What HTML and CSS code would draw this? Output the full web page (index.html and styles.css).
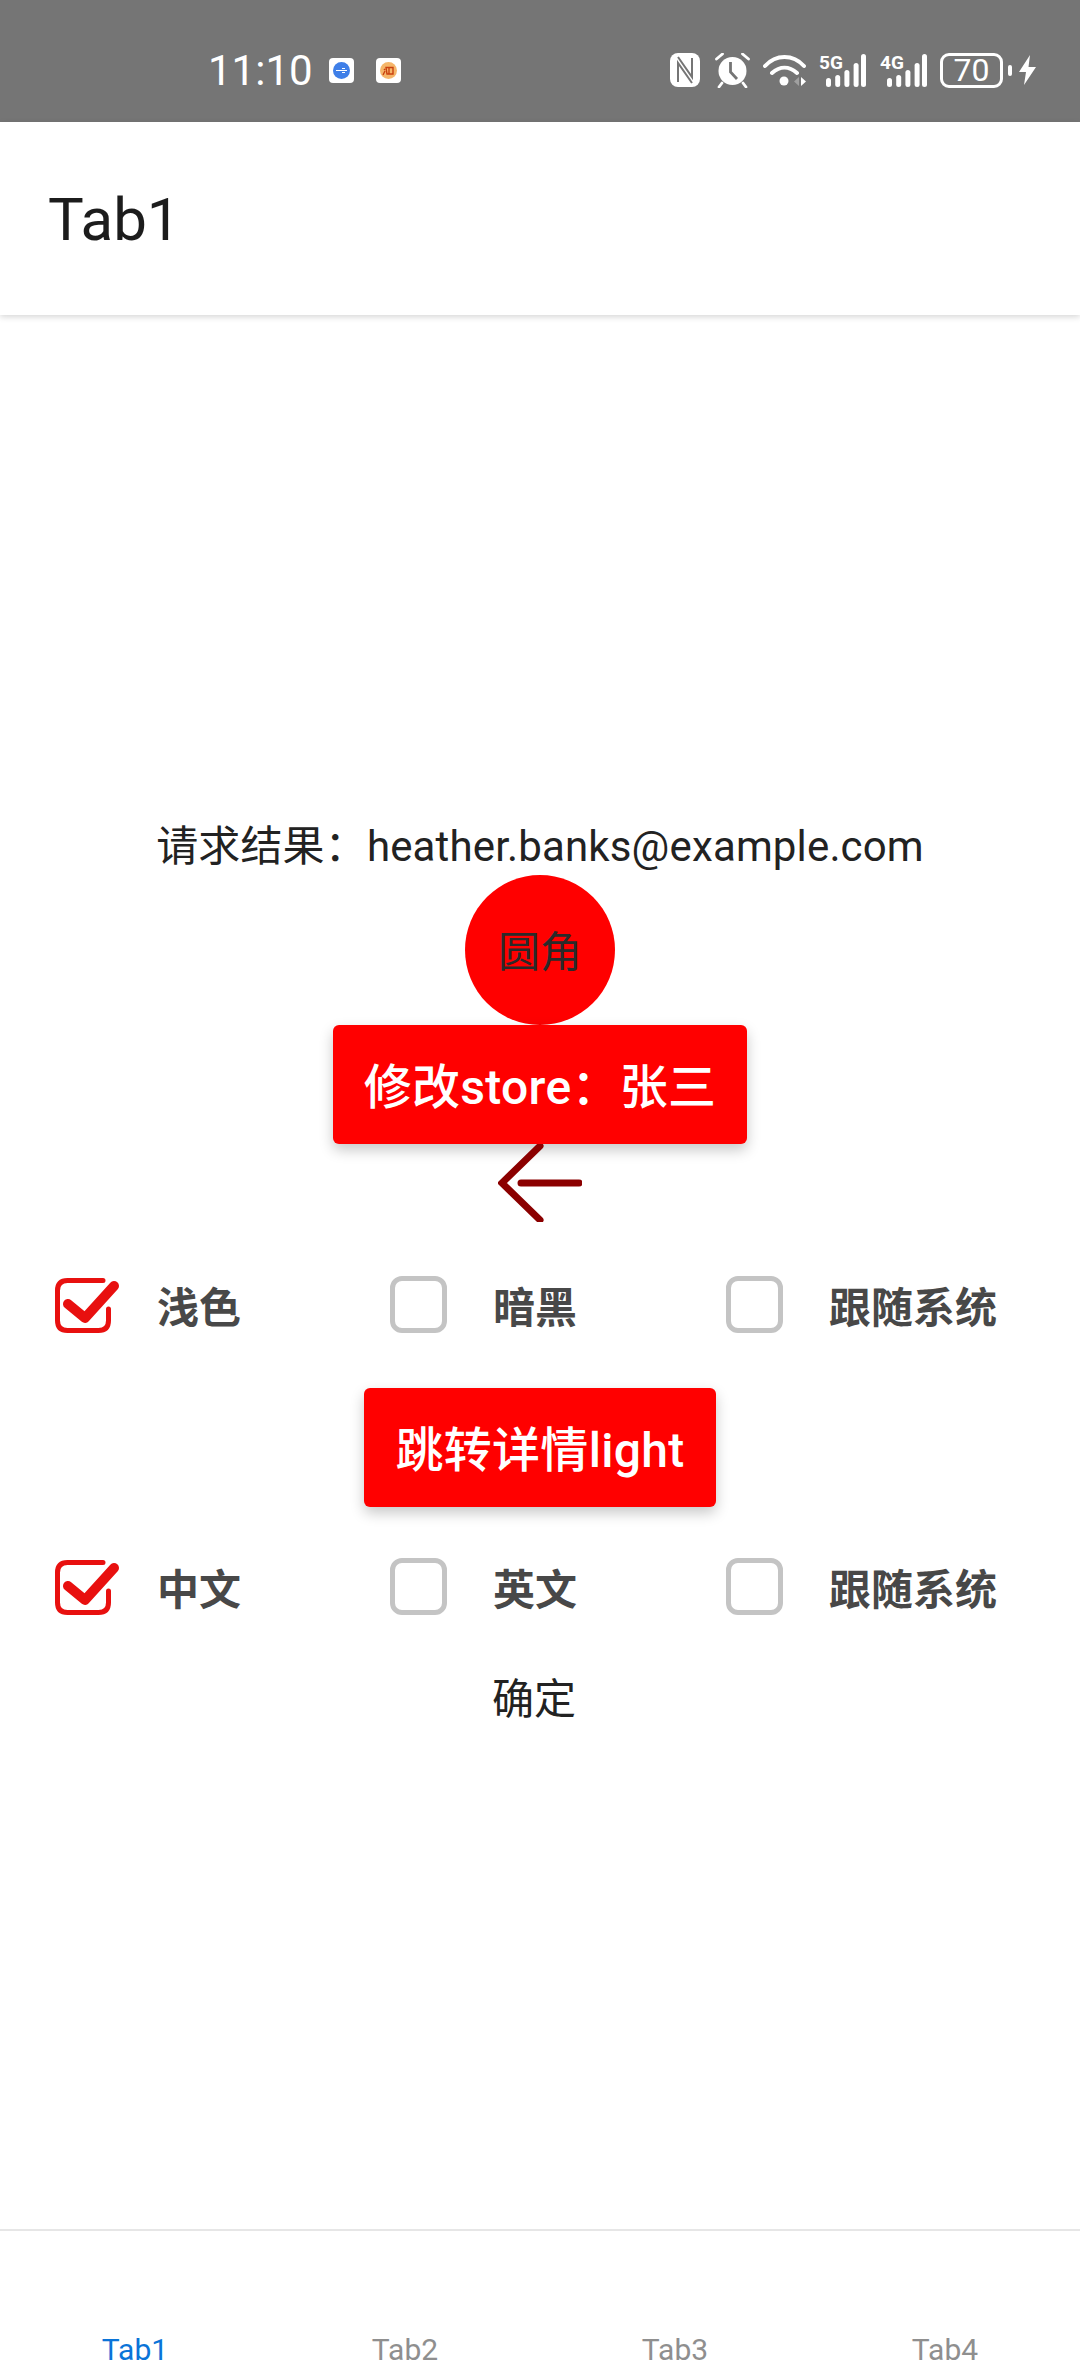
FILE: index.html
```html
<!DOCTYPE html>
<html lang="zh">
<head>
<meta charset="utf-8">
<title>Tab1</title>
<link rel="stylesheet" href="styles.css">
</head>
<body>
<div class="app">
  <div class="status">
    <span class="time">11:10</span>
    <span class="note"><svg viewBox="0 0 25 25" class="note-svg"><circle cx="12.5" cy="12.5" r="8.5" fill="#3f7fe8"/><path d="M7 12.500h11M13 10.500h3M13 14.500h3" stroke="#fff" stroke-width="1.2"/></svg></span>
    <span class="note"><svg viewBox="0 0 25 25" class="note-svg"><circle cx="12.5" cy="12.5" r="8.5" fill="#f5b66a"/><path d="M10 9.500h7v6.500h-6zM13 9.500v6.500M8 11l1 1M9 13l-2 4" stroke="#c9400f" stroke-width="1.4" fill="none"/></svg></span>
    <span class="spacer"></span>
    <svg class="i-nfc" viewBox="0 0 30 34"><rect width="30" height="34" rx="8" fill="#fff"/><path d="M8 29V10l14 20M22 5v19L8 4" fill="none" stroke="#757575" stroke-width="2"/></svg>
    <svg class="i-alarm" viewBox="0 0 35 35"><circle cx="17.500" cy="18" r="14" fill="#fff"/><path d="M15.500 9v10l6.500 7" fill="none" stroke="#757575" stroke-width="2.8"/><path d="M1.500 6l6-5M33.500 6l-6-5M7 30l-3 4M28 30l3 4" stroke="#fff" stroke-width="2.8" stroke-linecap="round"/></svg>
    <svg class="i-wifi" viewBox="0 0 43 32"><path d="M2 12C13 0 30 0 41 12M9 19c8-7 17-7 25 0" fill="none" stroke="#fff" stroke-width="4" stroke-linecap="round"/><circle cx="21" cy="27" r="4.500" fill="#fff"/><path d="M36 23l-5 4.500 5 4.500z" fill="#a0a0a0"/><path d="M38 23l5 4.500-5 4.500z" fill="#fff"/></svg>
    <svg class="i-sig" viewBox="0 -6 47 40"><text x="0" y="16" class="sig-t">5G</text><g fill="#fff"><rect x="7" y="25" width="5" height="9" rx="2.500"/><rect x="16.200" y="22" width="5" height="12" rx="2.500"/><rect x="25.400" y="17" width="5" height="17" rx="2.500"/><rect x="34.600" y="10" width="5" height="24" rx="2.500"/><rect x="42" y="1" width="5" height="33" rx="2.500"/></g></svg>
    <svg class="i-sig" viewBox="0 -6 47 40"><text x="0" y="16" class="sig-t">4G</text><g fill="#fff"><rect x="7" y="25" width="5" height="9" rx="2.500"/><rect x="16.200" y="22" width="5" height="12" rx="2.500"/><rect x="25.400" y="17" width="5" height="17" rx="2.500"/><rect x="34.600" y="10" width="5" height="24" rx="2.500"/><rect x="42" y="1" width="5" height="33" rx="2.500"/></g></svg>
    <span class="batt"><span class="batt-n">70</span></span>
    <span class="nub"></span>
    <svg class="i-bolt" viewBox="0 0 17 30"><path d="M11 0L0 17h7l-2 13L17 12H9.500z" fill="#fff"/></svg>
  </div>
  <header class="top"><h1 class="title">Tab1</h1></header>
  <main class="main">
    <p class="result">请求结果：heather.banks@example.com</p>
    <div class="round">圆角</div>
    <button class="btn">修改store：张三</button>
    <svg class="arrow" viewBox="0 0 84 78"><path d="M42 2L4 39l38 37M23 39h58" fill="none" stroke="#8b0000" stroke-width="7" stroke-linecap="round"/></svg>
    <div class="row row-a">
      <div class="opt"><svg class="box" viewBox="0 0 66 60"><path d="M49 6.500H13.500Q3.500 6.500 3.500 16.500V46.500Q3.500 56.500 13.500 56.500H44.500Q54.500 56.500 54.500 46.500V35" fill="none" stroke="#e8100f" stroke-width="5" stroke-linecap="round"/><path d="M14 30L31 44L60 12" fill="none" stroke="#e8100f" stroke-width="10" stroke-linecap="round" stroke-linejoin="round"/></svg><span class="lab">浅色</span></div>
      <div class="opt"><span class="off"></span><span class="lab">暗黑</span></div>
      <div class="opt"><span class="off"></span><span class="lab">跟随系统</span></div>
    </div>
    <button class="btn btn-b">跳转详情light</button>
    <div class="row row-b">
      <div class="opt"><svg class="box" viewBox="0 0 66 60"><path d="M49 6.500H13.500Q3.500 6.500 3.500 16.500V46.500Q3.500 56.500 13.500 56.500H44.500Q54.500 56.500 54.500 46.500V35" fill="none" stroke="#e8100f" stroke-width="5" stroke-linecap="round"/><path d="M14 30L31 44L60 12" fill="none" stroke="#e8100f" stroke-width="10" stroke-linecap="round" stroke-linejoin="round"/></svg><span class="lab">中文</span></div>
      <div class="opt"><span class="off"></span><span class="lab">英文</span></div>
      <div class="opt"><span class="off"></span><span class="lab">跟随系统</span></div>
    </div>
    <p class="ok">确定</p>
  </main>
  <nav class="tabs">
    <span class="tab tab-on">Tab1</span>
    <span class="tab">Tab2</span>
    <span class="tab">Tab3</span>
    <span class="tab">Tab4</span>
  </nav>
</div>
</body>
</html>
```
FILE: styles.css
```css
* { box-sizing: border-box; }
html, body { margin: 0; padding: 0; }
body { font-family: Roboto, "Noto Sans CJK SC", sans-serif; background: #fff; color: #222; }
.app { width: 1080px; height: 2376px; display: flex; flex-direction: column; overflow: hidden; }

.status { height: 122px; background: #757575; display: flex; align-items: center; padding: 18px 44px 0 208px; color: #fff; flex: none; }
.time { font-size: 42px; width: 121px; }
.note { width: 25px; height: 25px; background: #fff; border-radius: 4px; margin-right: 22px; display: block; }
.note-svg { display: block; width: 25px; height: 25px; }
.spacer { flex: 1; }
.i-nfc { width: 30px; height: 34px; margin-right: 15px; }
.i-alarm { width: 35px; height: 35px; margin-right: 13px; }
.i-wifi { width: 43px; height: 32px; margin-right: 13px; }
.i-sig { width: 47px; height: 40px; margin: -6px 14px 0 0; }
.sig-t { font: 700 19px Roboto, sans-serif; fill: #fff; }
.batt { width: 63px; height: 35px; border: 3px solid #fff; border-radius: 9px; display: flex; align-items: center; justify-content: center; margin-left: -1px; }
.batt-n { font-size: 32px; line-height: 1; }
.nub { width: 4px; height: 11px; background: #fff; border-radius: 2px; margin: 0 7px 0 5px; }
.i-bolt { width: 17px; height: 30px; }

.top { height: 193px; background: #fff; display: flex; align-items: center; padding: 2px 0 0 48px; box-shadow: 0 2px 6px rgba(0,0,0,.16); flex: none; position: relative; }
.title { margin: 0; font-size: 60px; font-weight: 400; color: #1c1c1c; }

.main { flex: 1; display: flex; flex-direction: column; align-items: center; padding-top: 503px; }
.result { margin: 0; font-size: 42px; line-height: 57px; color: #222; height: 57px; letter-spacing: .15px; white-space: nowrap; }
.round { width: 150px; height: 150px; border-radius: 50%; background: #f00; display: flex; align-items: center; justify-content: center; padding-bottom: 3px; font-size: 42px; color: #2a2a2a; flex: none; }
.btn { border: 0; background: #f00; color: #fff; font: 500 48px Roboto, "Noto Sans CJK SC", sans-serif; letter-spacing: .3px; height: 119px; padding: 0 31px 4px; border-radius: 6px; box-shadow: 0 6px 14px rgba(0,0,0,.22); flex: none; }
.arrow { width: 84px; height: 78px; flex: none; display: block; }
.row { width: 1008px; display: grid; grid-template-columns: repeat(3, 336px); flex: none; }
.row-a { margin-top: 50px; height: 64px; }
.btn-b { margin-top: 52px; }
.row-b { margin-top: 47px; height: 64px; }
.opt { display: flex; align-items: center; padding-left: 18px; }
.box { width: 66px; height: 60px; flex: none; }
.off { width: 57px; height: 57px; border: 5px solid #c4c4c4; border-radius: 12px; margin-right: 9px; flex: none; }
.lab { margin-left: 37px; font-size: 42px; font-weight: 700; color: #484848; white-space: nowrap; }
.ok { margin: 53px 12px 0 0; font-size: 42px; line-height: 57px; color: #222; }

.tabs { height: 147px; border-top: 2px solid #e6e6e6; display: grid; grid-template-columns: repeat(4, 270px); flex: none; }
.tab { text-align: center; font-size: 30px; color: #8f8f8f; padding-top: 101px; line-height: 36px; }
.tab-on { color: #0a74d8; }
```
